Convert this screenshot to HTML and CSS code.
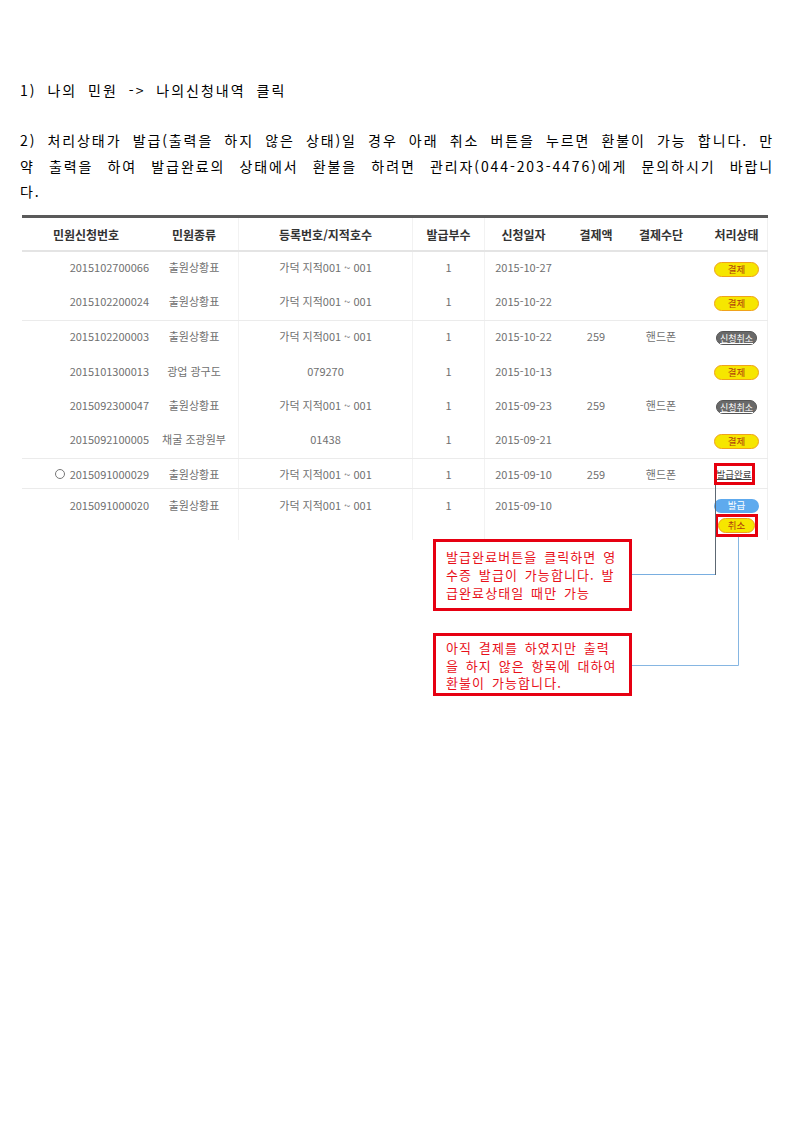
FILE: index.html
```html
<!DOCTYPE html>
<html lang="ko">
<head>
<meta charset="utf-8">
<title>나의신청내역</title>
<link rel="stylesheet" href="styles.css">
</head>
<body>
<main class="page">
  <p class="step step-one">1) 나의 민원 -&gt; 나의신청내역 클릭</p>
  <p class="step step-two">
    <span class="line just">2) 처리상태가 발급(출력을 하지 않은 상태)일 경우 아래 취소 버튼을 누르면 환불이 가능 합니다. 만</span>
    <span class="line just">약 출력을 하여 발급완료의 상태에서 환불을 하려면 관리자(044-203-4476)에게 문의하시기 바랍니</span>
    <span class="line">다.</span>
  </p>

  <section class="shot">
    <div class="table">
      <div class="row head">
        <div class="cell c1">민원신청번호</div>
        <div class="cell c2">민원종류</div>
        <div class="cell c3">등록번호/지적호수</div>
        <div class="cell c4">발급부수</div>
        <div class="cell c5">신청일자</div>
        <div class="cell c6">결제액</div>
        <div class="cell c7">결제수단</div>
        <div class="cell c8">처리상태</div>
      </div>

      <div class="row">
        <div class="cell c1">2015102700066</div>
        <div class="cell c2">출원상황표</div>
        <div class="cell c3">가덕 지적001 ~ 001</div>
        <div class="cell c4">1</div>
        <div class="cell c5">2015-10-27</div>
        <div class="cell c6"></div>
        <div class="cell c7"></div>
        <div class="cell c8"><span class="pill pay">결제</span></div>
      </div>
      <div class="row sep">
        <div class="cell c1">2015102200024</div>
        <div class="cell c2">출원상황표</div>
        <div class="cell c3">가덕 지적001 ~ 001</div>
        <div class="cell c4">1</div>
        <div class="cell c5">2015-10-22</div>
        <div class="cell c6"></div>
        <div class="cell c7"></div>
        <div class="cell c8"><span class="pill pay">결제</span></div>
      </div>
      <div class="row">
        <div class="cell c1">2015102200003</div>
        <div class="cell c2">출원상황표</div>
        <div class="cell c3">가덕 지적001 ~ 001</div>
        <div class="cell c4">1</div>
        <div class="cell c5">2015-10-22</div>
        <div class="cell c6">259</div>
        <div class="cell c7">핸드폰</div>
        <div class="cell c8"><span class="pill revoke">신청취소</span></div>
      </div>
      <div class="row">
        <div class="cell c1">2015101300013</div>
        <div class="cell c2">광업 광구도</div>
        <div class="cell c3">079270</div>
        <div class="cell c4">1</div>
        <div class="cell c5">2015-10-13</div>
        <div class="cell c6"></div>
        <div class="cell c7"></div>
        <div class="cell c8"><span class="pill pay">결제</span></div>
      </div>
      <div class="row">
        <div class="cell c1">2015092300047</div>
        <div class="cell c2">출원상황표</div>
        <div class="cell c3">가덕 지적001 ~ 001</div>
        <div class="cell c4">1</div>
        <div class="cell c5">2015-09-23</div>
        <div class="cell c6">259</div>
        <div class="cell c7">핸드폰</div>
        <div class="cell c8"><span class="pill revoke">신청취소</span></div>
      </div>
      <div class="row sep">
        <div class="cell c1">2015092100005</div>
        <div class="cell c2">채굴 조광원부</div>
        <div class="cell c3">01438</div>
        <div class="cell c4">1</div>
        <div class="cell c5">2015-09-21</div>
        <div class="cell c6"></div>
        <div class="cell c7"></div>
        <div class="cell c8"><span class="pill pay">결제</span></div>
      </div>
      <div class="row sep short">
        <div class="cell c1"><span class="radio"></span>2015091000029</div>
        <div class="cell c2">출원상황표</div>
        <div class="cell c3">가덕 지적001 ~ 001</div>
        <div class="cell c4">1</div>
        <div class="cell c5">2015-09-10</div>
        <div class="cell c6">259</div>
        <div class="cell c7">핸드폰</div>
        <div class="cell c8"><span class="mark done">발급완료</span></div>
      </div>
      <div class="row last">
        <div class="cell c1">2015091000020</div>
        <div class="cell c2">출원상황표</div>
        <div class="cell c3">가덕 지적001 ~ 001</div>
        <div class="cell c4">1</div>
        <div class="cell c5">2015-09-10</div>
        <div class="cell c6"></div>
        <div class="cell c7"></div>
        <div class="cell c8 stack">
          <span class="pill issue">발급</span>
          <span class="mark"><span class="pill pay small">취소</span></span>
        </div>
      </div>
    </div>

    <div class="notes">
      <div class="note note-one">
        <span class="line">발급완료버튼을 클릭하면 영</span>
        <span class="line">수증 발급이 가능합니다. 발</span>
        <span class="line">급완료상태일 때만 가능</span>
      </div>
      <div class="note note-two">
        <span class="line">아직 결제를 하였지만 출력</span>
        <span class="line">을 하지 않은 항목에 대하여</span>
        <span class="line">환불이 가능합니다.</span>
      </div>
    </div>

    <svg class="links" width="748" height="481" viewBox="0 0 748 481" aria-hidden="true">
      <path d="M612 359.5 H695.5" fill="none" stroke="#79aee0" stroke-width="1"/>
      <path d="M695.5 360 V270" fill="none" stroke="#5d6873" stroke-width="1"/>
      <path d="M612 450.5 H718.5 V322" fill="none" stroke="#86b6e2" stroke-width="1"/>
    </svg>
  </section>
</main>
</body>
</html>
```

FILE: styles.css
```css
* {
  box-sizing: border-box;
}

html,
body {
  margin: 0;
  padding: 0;
  background: #ffffff;
}

body {
  font-family: "Noto Sans CJK KR", "Noto Sans", sans-serif;
  color: #000000;
}

.page {
  width: 794px;
  padding: 78px 20px 0 20px;
}

.step {
  margin: 0;
  font-size: 14px;
  line-height: 25px;
  letter-spacing: 2px;
  word-spacing: 5px;
}

.step-two {
  margin-top: 25px;
  line-height: 25.5px;
  letter-spacing: 1.9px;
  word-spacing: 1.5px;
}

.line {
  display: block;
  white-space: nowrap;
}

.just {
  text-align: justify;
  text-align-last: justify;
}

/* screenshot area */
.shot {
  position: relative;
  width: 748px;
  margin-top: 10.5px;
  background: #ffffff;
}

.table {
  margin-left: 2px;
  width: 746px;
  font-size: 11px;
  color: #707070;
}

.row {
  display: grid;
  grid-template-columns: 128px 88px 174px 72px 78px 68px 62px 76px;
  height: 34.5px;
}

.row.sep {
  border-bottom: 1px solid #ebebeb;
}

.row.short {
  height: 30px;
}

.row.last {
  height: 51px;
}

.cell {
  display: flex;
  align-items: center;
  justify-content: center;
  padding-bottom: 4px;
  white-space: nowrap;
}

.c1 {
  justify-content: flex-end;
  padding-right: 1px;
}

.c3,
.c4,
.c5 {
  border-left: 1px solid #f2f2f2;
}

.c8 {
  padding-left: 14px;
  padding-bottom: 0;
  border-right: 1px solid #f0f0f0;
}

.head {
  height: 37px;
  border-top: 3px solid #5a5a5a;
  border-bottom: 2px solid #e4e4e4;
  font-size: 12px;
  font-weight: 700;
  color: #333333;
}

.head .cell {
  padding-bottom: 0;
}

.head .c1 {
  justify-content: center;
  padding-right: 0;
}

.short .cell {
  padding-bottom: 0;
}

.last .cell {
  align-items: flex-start;
  padding-top: 8px;
  padding-bottom: 0;
  line-height: 16px;
}

.last .c8 {
  padding-top: 10px;
}

.stack {
  flex-direction: column;
  align-items: center !important;
  justify-content: flex-start;
  gap: 1px;
}

.radio {
  display: inline-block;
  width: 10px;
  height: 10px;
  border: 1px solid #777777;
  border-radius: 50%;
  margin-right: 5px;
}

/* status buttons */
.pill {
  display: inline-flex;
  align-items: center;
  justify-content: center;
  width: 45px;
  height: 15px;
  border-radius: 8px;
  font-size: 9.5px;
  line-height: 1;
}

.pay {
  background: #f6e600;
  border: 1px solid #f0a21c;
  color: #b0400c;
}

.revoke {
  width: 41px;
  height: 14px;
  background: #696969;
  border: 1px solid #555555;
  color: #ffffff;
  text-decoration: underline;
  font-size: 9px;
}

.issue {
  height: 14px;
  background: #5eaaee;
  color: #ffffff;
}

.mark {
  display: inline-flex;
  align-items: center;
  justify-content: center;
  border: 3px solid #e6000e;
}

.done {
  width: 41px;
  height: 22px;
  margin-right: 5px;
  font-size: 9.5px;
  color: #444444;
  text-decoration: underline;
  overflow: visible;
}

.stack .mark {
  width: 43px;
  height: 23px;
}

.pill.small {
  width: 37px;
  height: 15px;
}

/* annotations */
.notes {
  display: flex;
  flex-direction: column;
  gap: 22px;
  width: 199px;
  margin-left: 413px;
  margin-top: -1px;
}

.note {
  border: 3px solid #e60012;
  color: #e8101a;
  font-size: 13px;
  letter-spacing: 1.1px;
  word-spacing: 2px;
  padding-left: 10px;
}

.note-one {
  height: 72px;
  padding-top: 6px;
  line-height: 18px;
}

.note-two {
  height: 63px;
  padding-top: 3px;
  line-height: 17.5px;
}

.links {
  position: absolute;
  top: 0;
  left: 0;
  pointer-events: none;
}
```
